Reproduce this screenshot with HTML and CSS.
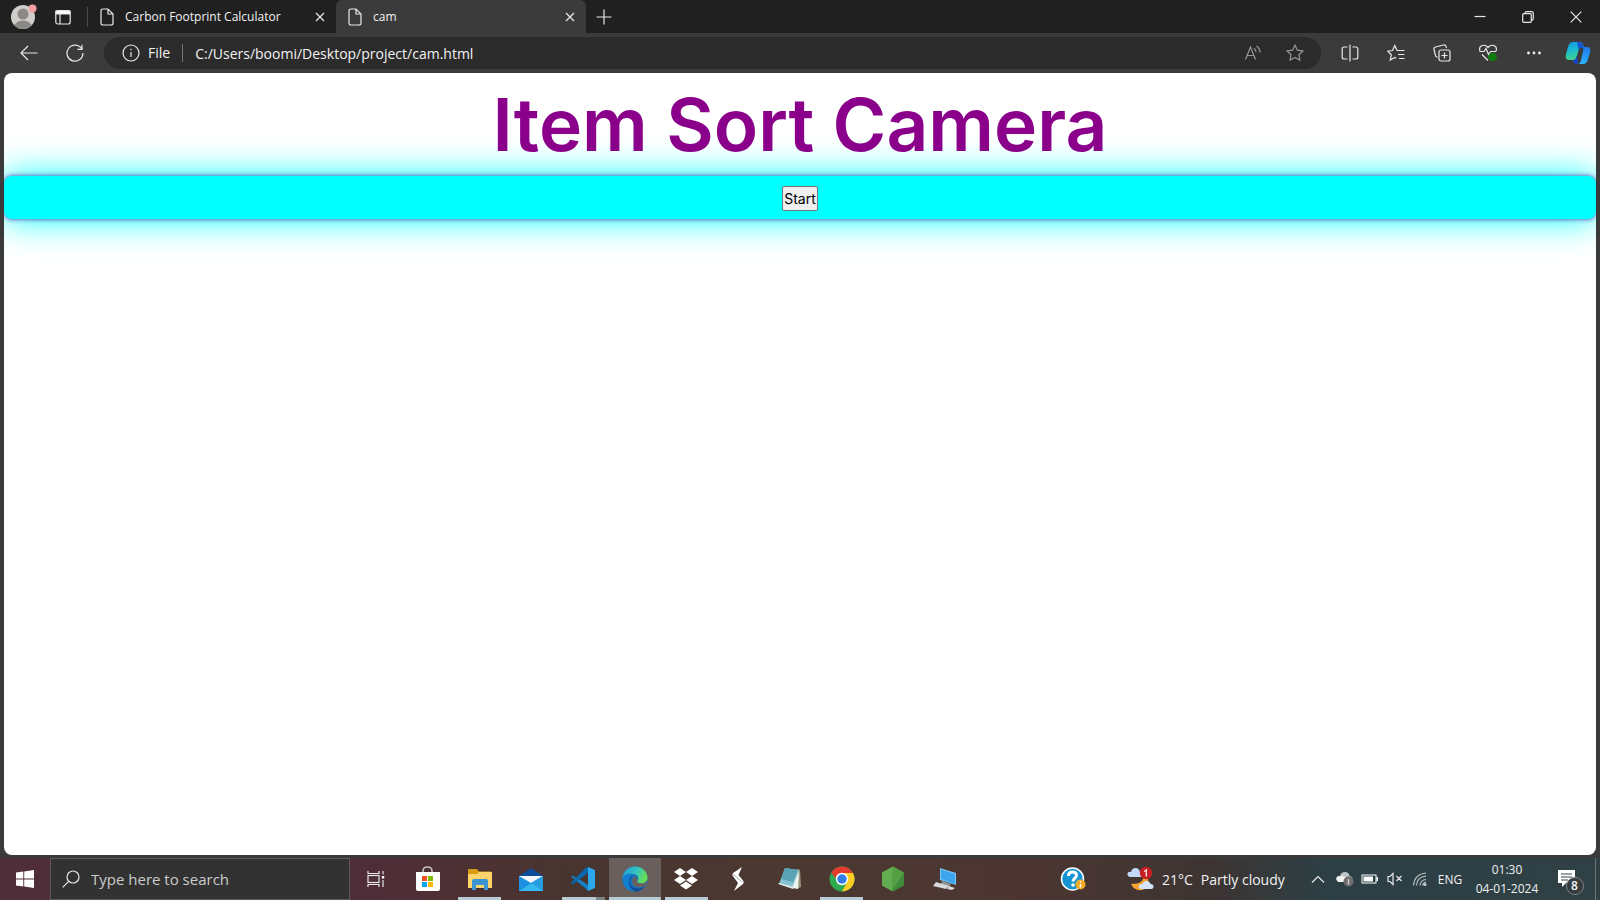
FILE: index.html
```html
<!DOCTYPE html>
<html lang="en">
<head>
<meta charset="utf-8">
<title>cam</title>
<link rel="stylesheet" href="styles.css">
</head>
<body>
<header class="tabbar">
  <button class="ib profile" aria-label="Profile"><svg width="28" height="30" viewBox="0 0 28 30"><defs><clipPath id="av"><circle cx="13" cy="16" r="12"/></clipPath></defs><circle cx="13" cy="16" r="12" fill="#cfcdca"/><g clip-path="url(#av)" fill="#8b8986"><circle cx="13" cy="13" r="5.5"/><ellipse cx="13" cy="26" rx="9" ry="6.5"/></g><circle cx="22.500" cy="7.500" r="4" fill="#f2a0a0"/></svg></button>
  <button class="ib workspaces" aria-label="Tab actions"><svg class="line" width="16" height="16" viewBox="0 0 16 16"><rect x=".8" y="1.500" width="14.400" height="13.500" rx="2"/><path d="M1 2h14v3H1z" fill="#fff"/><path d="M5 5v10"/></svg></button>
  <div class="tab">
    <svg class="line" width="14" height="18" viewBox="0 0 14 18"><path d="M3 1h5l5 5v9q0 2-2 2H3q-2 0-2-2V3q0-2 2-2zM8 1v5h5"/></svg>
    <span class="tab-title">Carbon Footprint Calculator</span>
    <button class="ib close" aria-label="Close tab"><svg class="line" width="10" height="10" viewBox="0 0 10 10"><path d="M1 1l8 8M9 1L1 9"/></svg></button>
  </div>
  <div class="tab active">
    <svg class="line" width="14" height="18" viewBox="0 0 14 18"><path d="M3 1h5l5 5v9q0 2-2 2H3q-2 0-2-2V3q0-2 2-2zM8 1v5h5"/></svg>
    <span class="tab-title">cam</span>
    <button class="ib close" aria-label="Close tab"><svg class="line" width="10" height="10" viewBox="0 0 10 10"><path d="M1 1l8 8M9 1L1 9"/></svg></button>
  </div>
  <button class="ib newtab" aria-label="New tab"><svg class="line" width="16" height="16" viewBox="0 0 16 16"><path d="M8 .5v15M.5 8h15"/></svg></button>
  <div class="window-buttons">
    <button class="ib" aria-label="Minimize"><svg class="line" width="12" height="12" viewBox="0 0 12 12"><path d="M.5 5.500h11"/></svg></button>
    <button class="ib" aria-label="Restore"><svg class="line" width="12" height="12" viewBox="0 0 12 12"><rect x=".7" y="2.700" width="8.600" height="8.600" rx="1"/><path d="M3 2.500V2Q3 .7 4.500 .7h5q1.800 0 1.800 1.800v5q0 1.500-1.500 1.800"/></svg></button>
    <button class="ib" aria-label="Close"><svg class="line" width="12" height="12" viewBox="0 0 12 12"><path d="M.7 .7l10.600 10.600M11.300 .7L.7 11.300"/></svg></button>
  </div>
</header>
<nav class="toolbar">
  <button class="ib nav" aria-label="Back"><svg class="line" width="18" height="16" viewBox="0 0 18 16"><path d="M8 1L1 8l7 7M1 8h16.500"/></svg></button>
  <button class="ib nav" aria-label="Refresh"><svg class="line" width="18" height="18" viewBox="0 0 18 18"><path d="M15.500 4.500A8 8 0 1 0 17 9M16 .7v4.600h-4.600"/></svg></button>
  <div class="address">
    <svg class="line" width="18" height="18" viewBox="0 0 18 18"><circle cx="9" cy="9" r="8"/><path d="M9 8v5M9 4.800v1.500"/></svg>
    <span class="scheme">File</span>
    <input class="url" aria-label="Address" value="C:/Users/boomi/Desktop/project/cam.html">
    <button class="ib addr" aria-label="Read aloud"><svg class="line dim" width="18" height="16" viewBox="0 0 18 16"><path d="M1.500 14.500L6.500 2l5 12.500M3.200 10.500h6.600M10 3.200q2 1.500 2 3.800M12.500 1q3.500 2.500 3.500 6.500"/></svg></button>
    <button class="ib addr" aria-label="Add to favorites"><svg class="line dim" width="18" height="18" viewBox="0 0 18 18"><path d="M9 1.200l2.400 5 5.500.7-4 3.800 1 5.500L9 13.500l-4.900 2.700 1-5.500-4-3.800 5.500-.7z"/></svg></button>
  </div>
  <div class="tools">
    <button class="ib" aria-label="Split screen"><svg class="line" width="18" height="18" viewBox="0 0 18 18"><path d="M6.500 3H3Q1.200 3 1.200 5v8q0 2 1.800 2h3.500M11.500 3H15q1.800 0 1.800 2v8q0 2-1.800 2h-3.500M9 .5v17"/></svg></button>
    <button class="ib" aria-label="Favorites"><svg class="line" width="18" height="18" viewBox="0 0 18 18"><path d="M10 6.500L7.800 1.500l-2.300 5-4.700.7 3.500 3.600-1 5.200 4.500-2.500 1.500.8M10 6.500h7.500M11 10.500h6.500M12 14.500h5.500"/></svg></button>
    <button class="ib" aria-label="Collections"><svg class="line" width="18" height="18" viewBox="0 0 18 18"><rect x="6" y="6" width="11" height="11" rx="2"/><path d="M11.500 8.500v6M8.500 11.500h6M13.500 4L13 2.300Q12.500 .5 10.500 1L2.500 3Q.5 3.500 1 5.500l1.500 6q.5 1.500 2 1.700"/></svg></button>
    <button class="ib" aria-label="Browser essentials"><svg class="line" width="20" height="18" viewBox="0 0 20 18"><path d="M2 7Q.5 3 4 1.500q3.500-1 6 2Q12.500.5 16 1.500q3.500 1.500 2 5.500M1.500 7.500H6l2-3 2.500 6 2-3H18M4 10.500l6 6"/><circle cx="14.500" cy="13" r="4.300" fill="#107c10" stroke="none"/></svg></button>
    <button class="ib" aria-label="Settings and more"><svg width="16" height="6" viewBox="0 0 16 6" fill="#eee"><circle cx="2.500" cy="3" r="1.400"/><circle cx="8" cy="3" r="1.400"/><circle cx="13.500" cy="3" r="1.400"/></svg></button>
    <button class="ib copilot" aria-label="Copilot"><svg width="26" height="24" viewBox="0 0 26 24"><defs><linearGradient id="ca" x1="0" y1="0" x2=".3" y2="1"><stop stop-color="#168fe8"/><stop offset=".5" stop-color="#19bad0"/><stop offset="1" stop-color="#43d38b"/></linearGradient><linearGradient id="cb" x1="0" y1="0" x2="0" y2="1"><stop stop-color="#1f75e8"/><stop offset="1" stop-color="#29b5ff"/></linearGradient></defs><path d="M8 1h7q2.500 0 3.500 4l.5 2h-3q-2 0-2.500 2l-2 8q-.5 2-3 2H4q-4 0-3.200-5l2.500-9Q4.500 1 8 1z" fill="url(#ca)"/><path d="M12 1h3q2.500 0 3.500 4l.5 2h-3q-2 0-2.500 2z" fill="#1557d0"/><path d="M17 6h5q4 0 3.200 5l-2.500 8q-1.200 4-4.700 4h-5q2 0 3-4l2-9q.5-2 0-4z" fill="url(#cb)"/><path d="M8 19q2.500 0 3-2l.7-2.500 1.300 7.500-2 1q-2 0-3-4z" fill="#1546cf"/></svg></button>
  </div>
</nav>
<main class="page">
  <h1>Item Sort Camera</h1>
  <div class="bar"><button class="start">Start</button></div>
</main>
<footer class="taskbar">
  <button class="ib win" aria-label="Start menu"><svg width="18" height="18" viewBox="0 0 18 18" fill="#fff"><path d="M0 2.600L7.300 1.600v7H0zM8.200 1.500L18 0v8.600H8.200zM0 9.400h7.300v7L0 15.400zM8.200 9.400H18V18l-9.800-1.400z"/></svg></button>
  <label class="search"><svg class="line" width="18" height="18" viewBox="0 0 18 18"><circle cx="11" cy="7" r="6"/><path d="M6.700 11.300L.7 17.300"/></svg><input aria-label="Search" placeholder="Type here to search"></label>
  <button class="ib taskview" aria-label="Task view"><svg class="line" width="18" height="16" viewBox="0 0 18 16"><path d="M1 0v2.500h11V0M1 16v-2.500h11V16M16 0v3.500M16 9v7"/><rect x="1" y="4.500" width="11" height="7"/><path d="M14.800 5h2.400v2.500h-2.400z" fill="#fff" stroke="none"/></svg></button>
  <div class="apps">
    <button class="ib app" aria-label="Store"><svg width="26" height="26" viewBox="0 0 26 26"><path d="M8 7V5q0-4 4.500-4T17 5v2" fill="none" stroke="#c9c5c7" stroke-width="1.500"/><path d="M1 6h24v17q0 2-2 2H3q-2 0-2-2z" fill="#fff"/><path fill="#f25022" d="M7 10h5v5H7z"/><path fill="#7fba00" d="M13 10h5v5h-5z"/><path fill="#00a4ef" d="M7 16h5v5H7z"/><path fill="#ffb900" d="M13 16h5v5h-5z"/></svg></button>
    <button class="ib app open" aria-label="File Explorer"><svg width="26" height="26" viewBox="0 0 26 26"><path d="M1 3h9l2 2.500h12V9H1z" fill="#d79b12"/><path d="M1 8h9l2-2h13v16H1z" fill="#ffd56b"/><path d="M5 24v-9q0-2 2-2h12q2 0 2 2v9h-4v-5H9v5z" fill="#3a95d1"/></svg></button>
    <button class="ib app" aria-label="Mail"><svg width="26" height="26" viewBox="0 0 26 26"><path d="M1 10L13 2l12 8v6H1z" fill="#0c4d9c"/><path d="M1 10h24v9H1z" fill="#f5f8fb"/><path d="M1 10l12 7 12-7v15H1z" fill="#1d91e0"/><path d="M25 10v15H1z" fill="#35b9f1"/><path d="M25 10v15L13 17z" fill="#249ddf"/></svg></button>
    <button class="ib app open multi" aria-label="Visual Studio Code"><svg width="26" height="26" viewBox="0 0 26 26"><path d="M18 1L6 12 3 9.500 1 10.500 15 22l3 3 2-2V6z" fill="#1680c5"/><path d="M9 13l9-7v13z" fill="#48342f"/><path d="M1 17l2 1.500L18 7V1l-3 1.500z" fill="#0868aa"/><path d="M18 1l7 3v18l-7 3z" fill="#2ba7eb"/></svg></button>
    <button class="ib app open current" aria-label="Microsoft Edge"><svg width="26" height="26" viewBox="0 0 26 26"><defs><linearGradient id="ea" x1="0" y1="0" x2="1" y2=".3"><stop stop-color="#229bd9"/><stop offset=".6" stop-color="#36c5bf"/><stop offset="1" stop-color="#65df58"/></linearGradient></defs><circle cx="13" cy="13" r="12.500" fill="#1673bf"/><path d="M.7 11C2 4 7 .5 13 .5c8 0 12.500 6 12.500 11 0 4-3 6-6.500 6-3 0-4.500-1.500-3.500-3 2.500-3-.5-6.500-5-6.500C6 8 2 10 .7 15z" fill="url(#ea)"/><path d="M1 11q4-5 10-3-4 1-4 6 0 7 7 11Q3 26 .7 16z" fill="#137fd0"/><path d="M9 12q-3 4 .5 8t11 1.500l2.500-1Q18.500 26 13 25.500 6 22 7 14q.5-3 3.500-4z" fill="#124c94"/><path d="M15.500 14q-1.500 3 3.500 3.500 4 0 6-3-1 4-3 6-8 2-11-2-2-4 1-8 3 .5 3.500 3.500z" fill="#69605e"/></svg></button>
    <button class="ib app open" aria-label="Dropbox"><svg width="26" height="26" viewBox="0 0 26 26" fill="#fff"><path d="M7 2l6 4-6 4-6-4zM19 2l6 4-6 4-6-4zM7 10l6 4-6 4-6-4zM19 10l6 4-6 4-6-4zM13 15.500l6 4-6 4-6-4z"/></svg></button>
    <button class="ib app" aria-label="Shortcut"><svg width="26" height="26" viewBox="0 0 26 26"><path d="M17 1L8 7q-1 1-.5 2.500L13 17 9 25l9-7q1.500-1.500 0-3.500L13.500 9z" fill="#fff"/><path d="M8 8l9 8" stroke="#aaa"/></svg></button>
    <button class="ib app" aria-label="Notepad"><svg width="26" height="26" viewBox="0 0 26 26"><path d="M20 3l3 1 1 17-4 2z" fill="#9a9a80"/><path d="M8 2l14 2-5 18-15-4z" fill="#84c4d2"/><path d="M8 2l13 2-5 12-12-3z" fill="#5aa3b4"/><path d="M22 5l-7 17 6 1z" fill="#eef4f2"/><path d="M2 17l-1 1 15 5 1-2z" fill="#e3e6e4"/></svg></button>
    <button class="ib app open" aria-label="Google Chrome"><svg width="26" height="26" viewBox="0 0 26 26"><circle cx="13" cy="13" r="12.500" fill="#2da94f"/><path d="M13 7h11A12.500 12.500 0 0 1 13 25.500l5.200-9.500z" fill="#fdcd25"/><path d="M2.200 6.700A12.500 12.500 0 0 1 24 7H13q-4 .5-5.500 6z" fill="#e33b2e"/><circle cx="13" cy="13" r="6.200" fill="#fff"/><circle cx="13" cy="13" r="4.700" fill="#347ce8"/></svg></button>
    <button class="ib app" aria-label="Node.js"><svg width="26" height="26" viewBox="0 0 26 26"><path d="M13 .5l11 6v13l-11 6-11-6v-13z" fill="#418b3d"/><path d="M13 .5L2 6.500v13l10 5.500z" fill="#62ad4f"/><path d="M13 .5l11 6-12 18z" fill="#54a045"/></svg></button>
    <button class="ib app" aria-label="Remote computer"><svg width="26" height="26" viewBox="0 0 26 26"><path d="M8 2l16 5v12L8 14z" fill="#7cc4f2"/><path d="M9 3.500l14 4.500v10L9 13z" fill="#3ba5ee"/><path d="M10 15l9 3-2 3-8-2z" fill="#90979b"/><path d="M4 16l13 4-3 3-13-3zM17 20l6 2-3 2-5-1z" fill="#d5d9db"/></svg></button>
  </div>
  <div class="tray">
    <button class="ib help" aria-label="Help"><svg width="26" height="26" viewBox="0 0 26 26"><circle cx="12.500" cy="13" r="11" fill="#1495d1" stroke="#fff" stroke-width="1.500"/><path d="M8.500 10q0-4 4-4t4 3.500c0 2.500-3.500 3-3.500 6" stroke="#fff" stroke-width="3" fill="none"/><circle cx="13" cy="19" r="1.800" fill="#fff"/><circle cx="20.500" cy="18.500" r="5" fill="#f5aa24"/><path d="M20.500 18v3.500M20.500 15v1.500" stroke="#fff" stroke-width="1.500"/></svg></button>
    <button class="ib weather"><svg width="28" height="26" viewBox="0 0 28 26"><path d="M17 9q2 9-12 9 3 7 11 6 8-2 6-12z" fill="#f6a331"/><path d="M4 11q-3-1-2.500-3.500T5 6Q6 2 9.500 2T14 6q3 0 3 2.500T14 11z" fill="#c4d9fa"/><path d="M15 23q-3-1-2-3.500 1-2 3.500-1.500 1-3 4-3t4 3q3 0 3 2.500T25 23z" fill="#d5e3fb"/><circle cx="20" cy="7" r="6.200" fill="#c51f23"/><path d="M18.300 5.500L20.300 4v6.500" fill="none" stroke="#fff" stroke-width="1.200"/></svg><span>21°C</span><span>Partly cloudy</span></button>
    <button class="ib t-chev" aria-label="Show hidden icons"><svg class="line" width="14" height="8" viewBox="0 0 14 8"><path d="M1 7.500l6-6 6 6"/></svg></button>
    <button class="ib t-icon" aria-label="Cloud storage"><svg width="18" height="16" viewBox="0 0 18 16"><path d="M3 11q-3-1-2.500-4T4 5q1-4 5-4t4.500 4q3 .5 3 3t-3 3z" fill="#bfc6c8"/><path d="M5 5q5-1 7 6H3Q-1 9 1 6z" fill="#f2f4f4"/><circle cx="12.500" cy="10.500" r="5" fill="#716c6d"/><path d="M12.500 8v5.500" stroke="#ccc" stroke-width="1.500"/></svg></button>
    <button class="ib t-icon" aria-label="Battery"><svg width="18" height="10" viewBox="0 0 18 10"><rect x="1" y="1" width="14" height="8" fill="none" stroke="#fff"/><path d="M2.500 2.500h9.500v5H2.500zM15.500 3h1.500v4h-1.500z" fill="#fff"/></svg></button>
    <button class="ib t-icon" aria-label="Muted"><svg class="line" width="16" height="14" viewBox="0 0 16 14"><path d="M1 4.500h2L6 1.500v11l-3-3H1zM9.500 4l5 5M14.500 4l-5 5"/></svg></button>
    <button class="ib t-icon" aria-label="Wireless network"><svg class="line dim-wifi" width="16" height="16" viewBox="0 0 16 16"><path d="M1.500 14.500Q2.500 3 14 2M4.500 14.500Q5 6 14 5.200M8 14.500q.5-5.500 6-6M10.500 14.500q.5-3 3.500-3.500"/><circle cx="13" cy="13.500" r="1" fill="#fff"/></svg></button>
    <button class="ib lang">ENG</button>
    <button class="ib clock"><span>01:30</span><span>04-01-2024</span></button>
    <button class="ib notif" aria-label="8 notifications"><svg width="28" height="28" viewBox="0 0 28 28"><path d="M1 2h17v13H9l-4 4v-4H1z" fill="#fff"/><path d="M4 6h11M4 9h11M4 12h7" stroke="#344448"/><circle cx="18" cy="18" r="8.500" fill="#353b3d" stroke="#7b8284"/></svg><span class="badge">8</span></button>
  </div>
</footer>
</body>
</html>
```
FILE: styles.css
```css
* { box-sizing: border-box; }
body {
  margin: 0;
  min-height: 100vh;
  display: flex;
  flex-direction: column;
  background: #3a3a3a;
  color: #f2f2f2;
  font-family: "Open Sans", "Noto Sans", sans-serif;
  font-size: 14px;
}
svg { display: block; flex: none; }
.line { fill: none; stroke: #e8e8e8; stroke-width: 1.2; }
.dim { stroke: #989898; }
.dim-wifi { stroke: #b5bfc1; }
.ib {
  display: flex;
  align-items: center;
  justify-content: center;
  flex: none;
  padding: 0;
  border: 0;
  background: none;
  color: inherit;
  font: inherit;
}

.tabbar {
  display: flex;
  height: 33px;
  background: #202020;
}
.profile { width: 48px; padding-bottom: 1px; }
.workspaces {
  width: 40px;
  padding-right: 12px;
  padding-left: 2px;
  background: linear-gradient(#4c4c4c, #4c4c4c) right center / 1px 20px no-repeat;
}
.tab {
  display: flex;
  align-items: center;
  gap: 11px;
  width: 248px;
  padding-left: 12px;
  border-radius: 0 0 6px 0;
  font-size: 12px;
}
.tab-title { flex: 1; }
.tab .close { width: 32px; height: 32px; }
.tab.active { width: 250px; background: #3b3b3b; border-radius: 6px 6px 0 0; }
.newtab { width: 36px; }
.window-buttons { display: flex; margin-left: auto; }
.window-buttons .ib { width: 48px; }

.toolbar {
  display: flex;
  align-items: center;
  height: 40px;
  padding: 0 1px 0 6px;
  background: #3b3b3b;
}
.nav { width: 46px; height: 32px; }
.address {
  display: flex;
  align-items: center;
  flex: 1;
  height: 32px;
  margin: 0 6px;
  padding: 0 5px 0 18px;
  border-radius: 16px;
  background: #2b2b2b;
}
.scheme { padding: 0 12px 0 8px; border-right: 1px solid #777; line-height: 18px; }
.url {
  flex: 1;
  min-width: 0;
  padding: 0 0 0 12px;
  border: 0;
  background: none;
  color: inherit;
  font: inherit;
}
.addr { width: 42px; height: 32px; }
.tools { display: flex; }
.tools .ib { width: 46px; height: 36px; }
.tools .copilot { width: 42px; }

.page {
  flex: 1;
  margin: 0 4px 3px;
  border-radius: 8px;
  overflow: hidden;
  background: #fff;
  text-align: center;
  font-family: Inter, sans-serif;
}
.page h1 {
  margin: 0;
  color: #8b008b;
  font-size: 73px;
  font-weight: 600;
  line-height: 103px;
}
.bar {
  display: flex;
  justify-content: center;
  padding: 10px 9px 8px;
  border-radius: 8px;
  background: #0ff;
  box-shadow: 0 0 5px #4b3fa8, 0 0 36px #0ff;
}
.start {
  padding: 1px;
  border: 1px solid #767676;
  border-radius: 2px;
  background: #efefef;
  color: #000;
  font-family: Inter, sans-serif;
  font-size: 14px;
  line-height: 21px;
}

.taskbar {
  display: flex;
  height: 42px;
  background: linear-gradient(90deg, #502e39 0, #4f2d37 24%, #48352f 36%, #4b3831 50%, #4c3531 64%, #3c3533 76%, #2c3f45 83%, #2f4144 100%);
}
.win { width: 50px; }
.search {
  display: flex;
  align-items: center;
  gap: 11px;
  width: 300px;
  padding-left: 11px;
  border: 1px solid #5b5b5b;
  background: #323232;
}
.search input {
  flex: 1;
  min-width: 0;
  padding: 0;
  border: 0;
  background: none;
  color: #ccc;
  font: inherit;
  font-size: 15px;
}
.search input::placeholder { color: #ccc; opacity: 1; }
.taskview { width: 52px; }
.apps { display: grid; grid-template-columns: repeat(11, 1fr); width: 569px; }
.open { background: linear-gradient(#b7cbd5, #b7cbd5) center bottom / 43px 3px no-repeat; }
.multi { background: linear-gradient(90deg, #b7cbd5 80%, #7b8586 80%) center bottom / 43px 3px no-repeat; }
.current { background: linear-gradient(#b7cbd5, #b7cbd5) center bottom / 100% 3px no-repeat, #69605e; }
.tray { display: flex; margin-left: auto; padding-right: 4px; }
.help { width: 42px; margin-right: 32px; }
.weather { gap: 8px; width: 162px; justify-content: flex-start; margin-right: 16px; }
.t-chev { width: 28px; }
.t-icon { width: 25px; }
.lang { width: 36px; font-size: 12px; }
.clock { flex-direction: column; width: 78px; font-size: 12px; line-height: 19px; }
.notif { position: relative; width: 50px; padding-top: 6px; border-right: 1px solid #6b777a; }
.badge { position: absolute; left: 20px; top: 19px; width: 17px; font-size: 12px; font-weight: 600; line-height: 18px; text-align: center; }
```
